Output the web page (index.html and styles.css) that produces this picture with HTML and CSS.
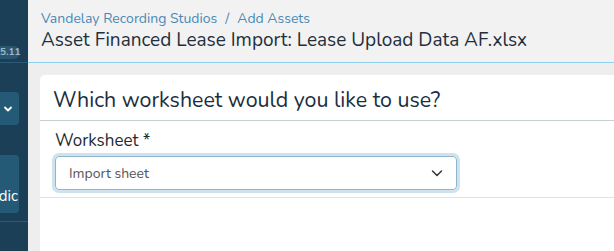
FILE: index.html
```html
<!DOCTYPE html>
<html lang="en">

<head>
  <meta charset="UTF-8">
  <meta name="viewport" content="width=device-width, initial-scale=1.0">
  <title>Add Assets</title>
  <link rel="stylesheet" href="styles.css">
</head>

<body>
  <div class="app">
    <div class="sidebar">
      <div class="side-top">
        <span class="version">5.11</span>
      </div>
      <div class="side-menu">
        <div class="side-btn side-btn-small">
          <svg width="10" height="10" viewBox="0 0 10 10"><path d="M2 3.5 L5 6.5 L8 3.5" fill="none" stroke="#fff" stroke-width="1.8" stroke-linecap="round" stroke-linejoin="round"/></svg>
        </div>
        <div class="side-btn side-btn-tall"><span>dic</span></div>
      </div>
    </div>
    <div class="main">
      <div class="page-header">
        <div class="crumbs"><a>Vandelay Recording Studios</a><span class="sep">/</span><a>Add Assets</a></div>
        <h1 class="title">Asset Financed Lease Import: Lease Upload Data AF.xlsx</h1>
      </div>
      <div class="content">
        <div class="card">
          <div class="card-header">Which worksheet would you like to use?</div>
          <div class="card-body">
            <label class="field-label">Worksheet *</label>
            <div class="select">
              <span>Import sheet</span>
              <svg width="14" height="14" viewBox="0 0 14 14"><path d="M2.5 5 L7 9.5 L11.5 5" fill="none" stroke="#333" stroke-width="1.5" stroke-linecap="round" stroke-linejoin="round"/></svg>
            </div>
          </div>
          <div class="card-footer"></div>
        </div>
      </div>
    </div>
  </div>
</body>

</html>
```

FILE: styles.css
```css
* {
  box-sizing: border-box;
}

body {
  margin: 0;
  font-family: "Nunito", "Lato", "Noto Sans", sans-serif;
  background: #eeeeee;
  overflow: hidden;
}

.app {
  display: flex;
  height: 251px;
}

.sidebar {
  width: 28px;
  background: #1b3f56;
  flex-shrink: 0;
  overflow: hidden;
}

.side-top {
  height: 63px;
  border-bottom: 1px solid #2a5a78;
  padding-top: 46px;
}

.version {
  display: block;
  width: 28px;
  margin-left: -8px;
  padding: 0 0 0 8px;
  height: 13px;
  line-height: 13px;
  font-size: 10px;
  font-weight: 700;
  color: #9fb8c8;
  background: #2a5670;
  border-radius: 7px;
}

.side-menu {
  padding-top: 29px;
  height: 159px;
  border-bottom: 1px solid #2a5a78;
}

.side-btn {
  width: 20px;
  margin-left: -1px;
  background: #245a76;
  border-radius: 0 4px 4px 0;
  color: #fff;
  display: flex;
  align-items: center;
  justify-content: flex-end;
}

.side-btn-small {
  height: 33px;
  padding-right: 6px;
}

.side-btn-tall {
  margin-top: 30px;
  height: 58px;
  align-items: flex-end;
  padding-bottom: 7px;
  font-size: 15px;
  padding-right: 1px;
}

.main {
  flex: 1;
  min-width: 0;
  display: flex;
  flex-direction: column;
}

.page-header {
  height: 63px;
  background: #f2f2f2;
  border-bottom: 1px solid #8fd0ee;
  padding: 10px 13px 0;
  white-space: nowrap;
}

.crumbs {
  font-size: 14px;
  line-height: 18px;
  color: #4a89b4;
}

.sep {
  margin: 0 8px;
}

.title {
  margin: -1px 0 0;
  font-size: 19px;
  line-height: 26px;
  font-weight: 400;
  color: #1f2f3d;
}

.content {
  flex: 1;
  padding: 12px 0 0 12px;
}

.card {
  background: #fff;
  border-radius: 5px 0 0 0;
  height: 100%;
  margin-right: -6px;
}

.card-header {
  height: 46px;
  padding: 12px 13px 0;
  font-size: 21.4px;
  line-height: 26px;
  color: #1a2e40;
  border-bottom: 1px solid #c9d0d4;
  white-space: nowrap;
}

.card-body {
  padding: 9px 15px 0 15px;
  height: 77px;
  border-bottom: 1px solid #e2e2e2;
}

.field-label {
  display: block;
  font-size: 17px;
  line-height: 22px;
  color: #1f2a33;
}

.select {
  margin-top: 4px;
  width: 402px;
  height: 34px;
  border: 1px solid #8fb6cc;
  border-radius: 4px;
  box-shadow: 0 0 0 3px #cfe3ee;
  display: flex;
  align-items: center;
  justify-content: space-between;
  padding: 0 12px 0 13px;
  font-size: 14px;
  color: #555;
}
```
